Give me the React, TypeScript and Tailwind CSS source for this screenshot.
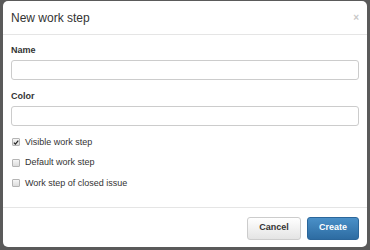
import React from 'react';

const CheckRow: React.FC<{ label: string; checked?: boolean }> = ({ label, checked }) => (
    <label className="flex items-center h-[20.5px] text-[9px] text-[#333]">
        <span className="w-[8px] h-[8px] ml-[1px] mr-[5px] border border-[#b4b4b4] rounded-[1px] bg-gradient-to-b from-[#f6f6f6] to-[#dcdcdc] flex items-center justify-center">
            {checked && (
                <svg viewBox="0 0 10 10" className="w-[7px] h-[7px]">
                    <path d="M1.5 5.2 L4 7.8 L8.8 1.8" fill="none" stroke="#222" strokeWidth={2} />
                </svg>
            )}
        </span>
        {label}
    </label>
);

const App: React.FC = () => {
    return (
        <div className="w-[370px] h-[250px] bg-[#5a5a5a] pt-[1px] pl-[3px] pr-[3px] pb-[3px] font-['Liberation_Sans',Arial,sans-serif]">
            <div className="h-[246px] bg-white rounded-[5px] flex flex-col">
                {/* Header */}
                <div className="h-[34px] flex items-center justify-between px-[8px] border-b border-[#e5e5e5]">
                    <h1 className="text-[12px] text-[#333] pt-[1px]">New work step</h1>
                    <span className="text-[10px] font-bold text-[#c8c8c8]">×</span>
                </div>

                {/* Body */}
                <div className="px-[8px] pt-[8px] flex-1">
                    <div className="text-[9px] font-bold text-[#333] h-[14px] leading-[14px]">Name</div>
                    <div className="mt-[3px] h-[20px] border border-[#ccc] rounded-[3px]" />
                    <div className="mt-[9px] text-[9px] font-bold text-[#333] h-[14px] leading-[14px]">Color</div>
                    <div className="mt-[3px] h-[20px] border border-[#ccc] rounded-[3px]" />
                    <div className="mt-[6px] flex flex-col">
                        <CheckRow label="Visible work step" checked />
                        <CheckRow label="Default work step" />
                        <CheckRow label="Work step of closed issue" />
                    </div>
                </div>

                {/* Footer */}
                <div className="h-[40px] border-t border-[#e5e5e5] flex items-center justify-end gap-[6px] px-[8px] pt-[1px]">
                    <button className="w-[54px] h-[23px] rounded-[3px] border border-[#ccc] bg-gradient-to-b from-white to-[#e4e4e4] text-[9px] font-bold text-[#333]">
                        Cancel
                    </button>
                    <button className="w-[52px] h-[23px] rounded-[3px] border border-[#2b669a] bg-gradient-to-b from-[#4a90c8] to-[#2d6ca2] text-[9px] font-bold text-white">
                        Create
                    </button>
                </div>
            </div>
        </div>
    );
};

export default App;
